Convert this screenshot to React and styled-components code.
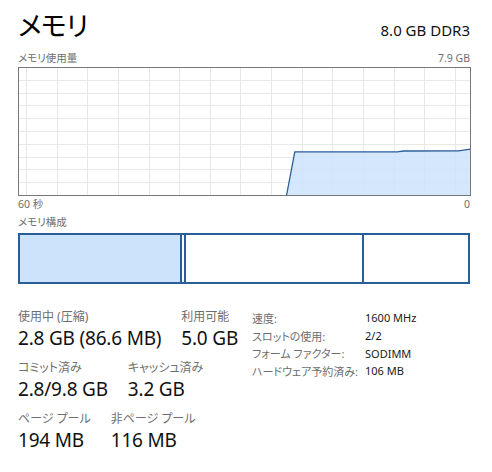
import React from "react";
import styled, { createGlobalStyle } from "styled-components";

const Global = createGlobalStyle`
  html, body { margin: 0; padding: 0; background: #fff; }
  body {
    font-family: "Noto Sans", "Noto Sans CJK JP", sans-serif;
    color: #1a1a1a;
    font-feature-settings: "palt";
  }
`;

const Page = styled.div`
  width: 492px;
  height: 472px;
  box-sizing: border-box;
  padding: 8px 22px 0 18px;
  overflow: hidden;
`;

const Header = styled.div`
  display: flex;
  justify-content: space-between;
  align-items: baseline;
  height: 42px;
`;

const Title = styled.div`
  font-size: 27px;
  font-weight: 400;
  line-height: 36px;
  color: #000;
  letter-spacing: -0.5px;
`;

const Spec = styled.div`
  font-size: 15px;
  line-height: 20px;
  color: #111;
`;

const Caption = styled.div`
  display: flex;
  justify-content: space-between;
  font-size: 10.5px;
  line-height: 16px;
  color: #6e6e6e;
  height: ${(p) => p.$h || 17}px;
`;

const ChartSvg = styled.svg`
  display: block;
`;

const Composition = styled.div`
  display: flex;
  height: 51px;
  box-sizing: border-box;
  border: 2px solid #2a5e98;
`;

const Segment = styled.div`
  box-sizing: border-box;
  width: ${(p) => (p.$w ? `${p.$w}px` : "auto")};
  flex: ${(p) => (p.$w ? "none" : "1")};
  background: ${(p) => (p.$filled ? "#cce3fb" : "#fff")};
  border-right: ${(p) => (p.$last ? "none" : "2px solid #2a5e98")};
`;

const Stats = styled.div`
  display: flex;
  margin-top: 24px;
`;

const LeftStats = styled.div`
  width: 234px;
  display: flex;
  flex-direction: column;
  gap: 7px;
`;

const StatRow = styled.div`
  display: flex;
  gap: 20px;
`;

const Stat = styled.div`
  display: flex;
  flex-direction: column;
`;

const StatLabel = styled.div`
  font-size: 12px;
  line-height: 17px;
  color: #6e6e6e;
`;

const StatValue = styled.div`
  font-size: 19px;
  line-height: 27px;
  letter-spacing: -0.2px;
  color: #111;
  white-space: nowrap;
`;

const Details = styled.div`
  display: grid;
  grid-template-columns: 113px auto;
  grid-auto-rows: 17.7px;
  padding-top: 1px;
  font-size: 11px;
  align-items: center;
`;

const DetailLabel = styled.div`
  color: #6e6e6e;
  white-space: nowrap;
`;

const DetailValue = styled.div`
  color: #1a1a1a;
  white-space: nowrap;
`;

function UsageChart() {
  const w = 452;
  const h = 128;
  const vlines = [];
  for (let k = 0; k < 15; k++) vlines.push(8 + 30.64 * k);
  const hlines = [];
  for (let j = 1; j < 10; j++) hlines.push(12.8 * j);
  const top = [
    [268, 128],
    [276.3, 84.3],
    [378.7, 84.3],
    [385, 83.5],
    [440, 83.3],
    [452, 81.7],
  ];
  const fillPts = [...top, [452, 128]].map((p) => p.join(",")).join(" ");
  const linePts = top.map((p) => p.join(",")).join(" ");
  return (
    <ChartSvg width={w + 1} height={h + 1} viewBox={`-0.5 -0.5 ${w + 1} ${h + 1}`}>
      {vlines.map((x) => (
        <line key={"v" + x} x1={Math.round(x)} y1={0} x2={Math.round(x)} y2={h} stroke="#e8e8e8" strokeWidth="1" />
      ))}
      {hlines.map((y) => (
        <line key={"h" + y} x1={0} y1={Math.round(y)} x2={w} y2={Math.round(y)} stroke="#e8e8e8" strokeWidth="1" />
      ))}
      <polygon points={fillPts} fill="#cce3fb" fillOpacity="0.85" />
      <polyline points={linePts} fill="none" stroke="#2a5e98" strokeWidth="1.3" />
      <rect x={0} y={0} width={w} height={h} fill="none" stroke="#777" strokeWidth="1" />
    </ChartSvg>
  );
}

const details = [
  ["速度:", "1600 MHz"],
  ["スロットの使用:", "2/2"],
  ["フォーム ファクター:", "SODIMM"],
  ["ハードウェア予約済み:", "106 MB"],
];

export default function App() {
  return (
    <>
      <Global />
      <Page>
        <Header>
          <Title>メモリ</Title>
          <Spec>8.0 GB DDR3</Spec>
        </Header>
        <Caption>
          <span>メモリ使用量</span>
          <span>7.9 GB</span>
        </Caption>
        <UsageChart />
        <Caption $h={18}>
          <span>60 秒</span>
          <span>0</span>
        </Caption>
        <Caption $h={19}>
          <span>メモリ構成</span>
        </Caption>
        <Composition>
          <Segment $filled $w={162} />
          <Segment $w={4} />
          <Segment $w={178} />
          <Segment $last />
        </Composition>
        <Stats>
          <LeftStats>
            <StatRow>
              <Stat>
                <StatLabel>使用中 (圧縮)</StatLabel>
                <StatValue>2.8 GB (86.6 MB)</StatValue>
              </Stat>
              <Stat>
                <StatLabel>利用可能</StatLabel>
                <StatValue>5.0 GB</StatValue>
              </Stat>
            </StatRow>
            <StatRow>
              <Stat>
                <StatLabel>コミット済み</StatLabel>
                <StatValue>2.8/9.8 GB</StatValue>
              </Stat>
              <Stat>
                <StatLabel>キャッシュ済み</StatLabel>
                <StatValue>3.2 GB</StatValue>
              </Stat>
            </StatRow>
            <StatRow>
              <Stat>
                <StatLabel>ページ プール</StatLabel>
                <StatValue>194 MB</StatValue>
              </Stat>
              <Stat>
                <StatLabel>非ページ プール</StatLabel>
                <StatValue>116 MB</StatValue>
              </Stat>
            </StatRow>
          </LeftStats>
          <Details>
            {details.map(([l, v]) => (
              <React.Fragment key={l}>
                <DetailLabel>{l}</DetailLabel>
                <DetailValue>{v}</DetailValue>
              </React.Fragment>
            ))}
          </Details>
        </Stats>
      </Page>
    </>
  );
}
